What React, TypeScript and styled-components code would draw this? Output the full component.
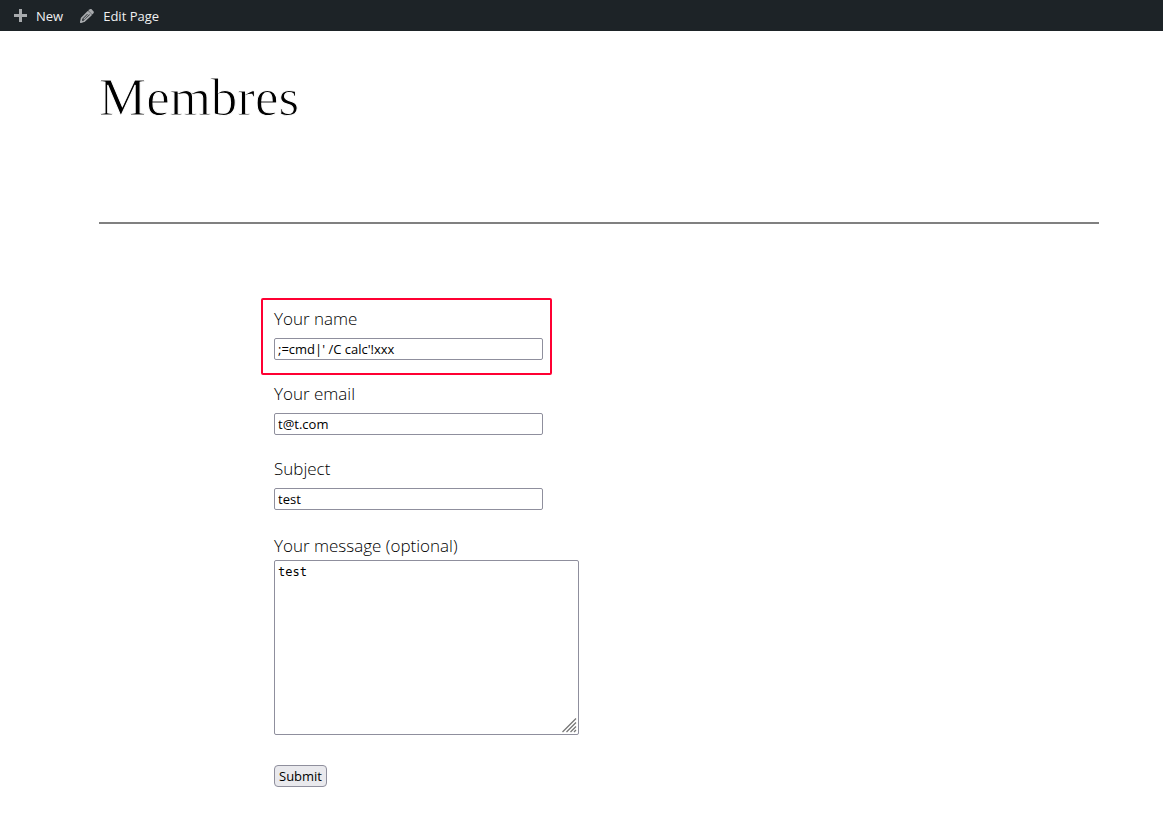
import React from "react";
import styled, { createGlobalStyle, css } from "styled-components";

const GlobalStyle = createGlobalStyle`
  *, *::before, *::after { box-sizing: border-box; }
  body {
    margin: 0;
    background: #fff;
    color: #000;
    font-family: "Open Sans", "Noto Sans", sans-serif;
  }
`;

const AdminBar = styled.nav`
  display: flex;
  align-items: center;
  gap: 16px;
  height: 31px;
  padding: 0 13px;
  background: #1d2327;
`;

const AdminLink = styled.a`
  display: flex;
  align-items: center;
  gap: 8px;
  color: #f0f0f1;
  font-size: 13px;
  line-height: 32px;
  text-decoration: none;
`;

const Page = styled.main`
  padding: 0 64px 30px 99px;
`;

const Title = styled.h1`
  margin: 0;
  padding: 31px 0 90px;
  border-bottom: 2px solid #808080;
  font-family: "Liberation Serif", serif;
  font-size: 53px;
  font-weight: 300;
  line-height: 70px;
  -webkit-text-stroke: 1px #fff;
`;

const Form = styled.form`
  display: flex;
  flex-direction: column;
  align-items: flex-start;
  gap: 20px;
  max-width: 650px;
  margin: 81px auto 0;
`;

const Field = styled.div<{ $flagged?: boolean }>`
  position: relative;
  display: flex;
  flex-direction: column;
  gap: 5px;
  max-width: 100%;

  ${({ $flagged }) =>
    $flagged &&
    css`
      &::after {
        content: "";
        position: absolute;
        inset: -7px -9px -15px -13px;
        border: 2px solid #ff0033;
        border-radius: 2px;
        pointer-events: none;
      }
    `}
`;

const MessageField = styled(Field)`
  gap: 0;
  padding-top: 2px;
`;

const Label = styled.label`
  font-size: 17px;
  font-weight: 300;
  line-height: 28px;
`;

const Input = styled.input`
  width: 269px;
  max-width: 100%;
  height: 22px;
  padding: 1px 3px;
  border: 1px solid #8f8f9d;
  border-radius: 2px;
  background: #fff;
  color: #000;
  font-family: "Open Sans", sans-serif;
  font-size: 13px;
  outline: none;
`;

const MessageBox = styled.div`
  position: relative;
  display: flex;
`;

const TextArea = styled.textarea`
  width: 305px;
  max-width: 100%;
  height: 175px;
  padding: 3px;
  border: 1px solid #8f8f9d;
  border-radius: 2px;
  background: #fff;
  color: #000;
  font-family: "DejaVu Sans Mono", monospace;
  font-size: 12px;
  line-height: 16px;
  resize: none;
  outline: none;
`;

const Grip = styled.svg`
  position: absolute;
  right: 2px;
  bottom: 2px;
  pointer-events: none;
`;

const SubmitButton = styled.button`
  height: 22px;
  margin-top: 10px;
  padding: 0 4px;
  border: 1px solid #8f8f9d;
  border-radius: 4px;
  background: #e9e9ed;
  color: #000;
  font-family: "Open Sans", sans-serif;
  font-size: 13px;
  line-height: 20px;
`;

const PlusIcon = () => (
  <svg width="15" height="15" viewBox="0 0 15 15" aria-hidden="true">
    <path d="M6 1h3v5h5v3H9v5H6V9H1V6h5z" fill="#a7aaad" />
  </svg>
);

const PencilIcon = () => (
  <svg width="16" height="16" viewBox="0 0 16 16" aria-hidden="true">
    <path
      fill="#a7aaad"
      d="M10.4 1.4 11.4.9 12.4 1.1 14.6 3.4 14.8 4.4 14.3 5.4 13.2 6.4 9.3 2.5Z"
    />
    <path
      d="M9 3.8 12 6.8 5.2 13.2 2 14 2.6 10.4Z"
      fill="none"
      stroke="#a7aaad"
      strokeWidth="1.7"
      strokeLinejoin="round"
    />
    <path d="M4.6 11.3 9.8 6" stroke="#a7aaad" strokeWidth="1.1" />
    <path d="M1 15 1.5 12.4 3.7 14.5Z" fill="#a7aaad" />
  </svg>
);

const fields = [
  { id: "your-name", label: "Your name", type: "text", value: ";=cmd|' /C calc'!xxx", flagged: true },
  { id: "your-email", label: "Your email", type: "email", value: "t@t.com" },
  { id: "your-subject", label: "Subject", type: "text", value: "test" },
];

export default function App() {
  return (
    <>
      <GlobalStyle />
      <AdminBar aria-label="Toolbar">
        <AdminLink href="#new">
          <PlusIcon />
          New
        </AdminLink>
        <AdminLink href="#edit">
          <PencilIcon />
          Edit Page
        </AdminLink>
      </AdminBar>
      <Page>
        <Title>Membres</Title>
        <Form onSubmit={(event) => event.preventDefault()}>
          {fields.map((field) => (
            <Field key={field.id} $flagged={field.flagged}>
              <Label htmlFor={field.id}>{field.label}</Label>
              <Input id={field.id} type={field.type} defaultValue={field.value} />
            </Field>
          ))}
          <MessageField>
            <Label htmlFor="your-message">Your message (optional)</Label>
            <MessageBox>
              <TextArea id="your-message" defaultValue="test" spellCheck={false} />
              <Grip width="15" height="15" viewBox="0 0 15 15" aria-hidden="true">
                <path
                  d="M0.5 14 14 0.5M4.5 14 14 4.5M8.5 14 14 8.5M12 14 14 12"
                  stroke="#777"
                  strokeWidth="1.3"
                />
              </Grip>
            </MessageBox>
          </MessageField>
          <SubmitButton type="submit">Submit</SubmitButton>
        </Form>
      </Page>
    </>
  );
}
